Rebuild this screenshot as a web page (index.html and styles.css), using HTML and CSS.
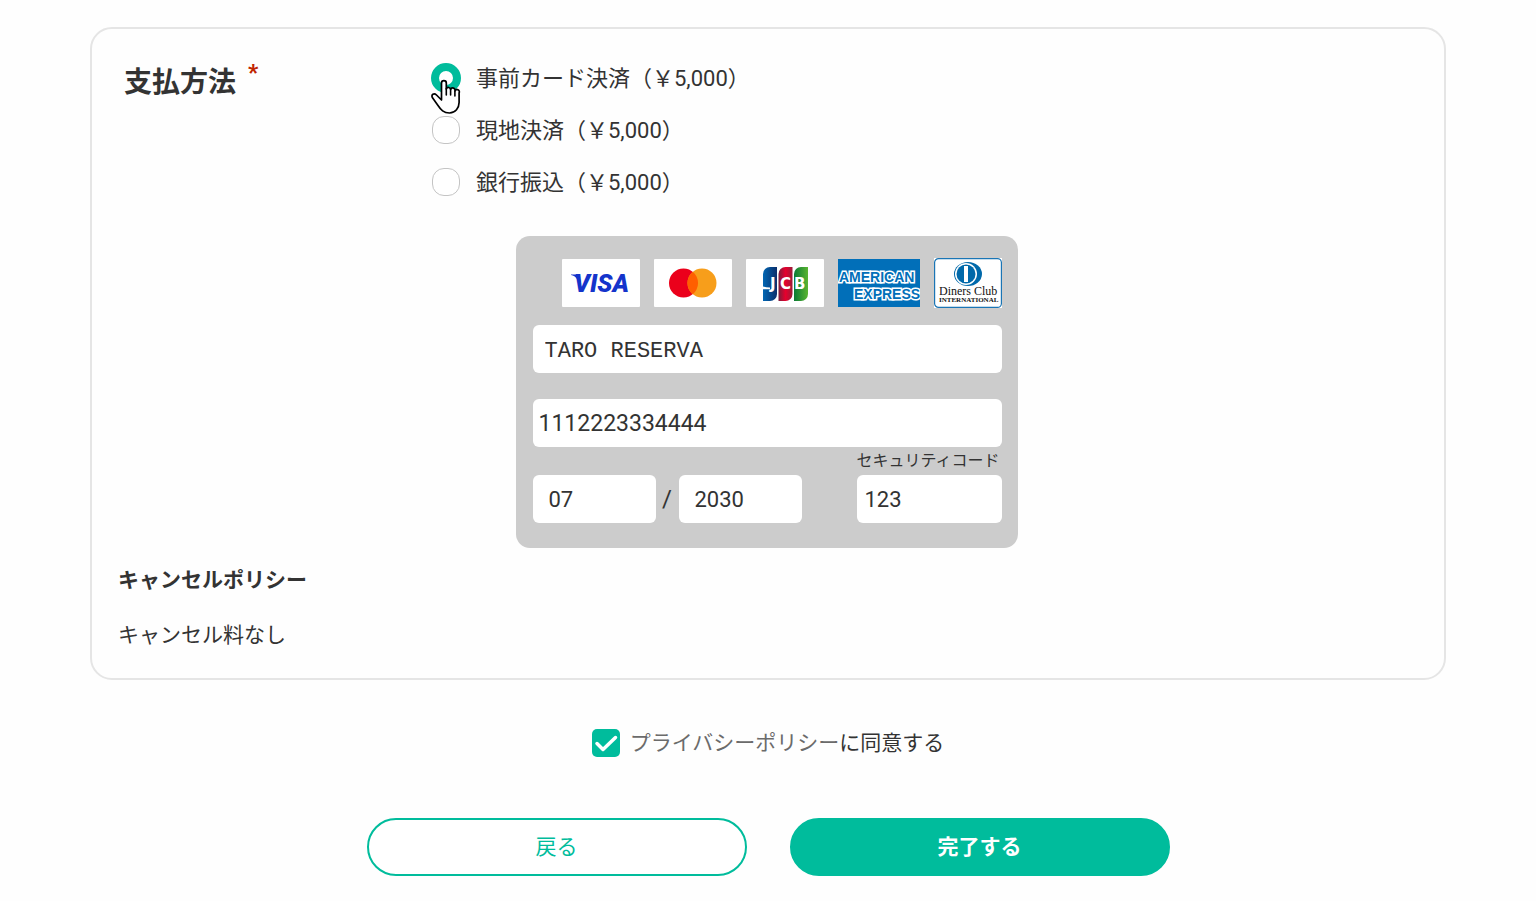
FILE: index.html
```html
<!DOCTYPE html>
<html lang="ja">
<head>
    <meta charset="UTF-8">
    <meta name="viewport" content="width=device-width, initial-scale=1.0">
    <title>支払方法</title>
    <link rel="stylesheet" href="styles.css">
</head>
<body>

    <form class="payment-form">
        <section class="panel">
            <div class="method">
                <h2 class="method-title" id="methodTitle">支払方法<span class="required">*</span></h2>

                <div class="options" role="radiogroup" aria-labelledby="methodTitle">
                    <div class="option">
                        <input type="radio" name="payment" id="payCard" checked>
                        <label for="payCard">事前カード決済（￥5,000）</label>
                        <!-- Hand pointer -->
                        <svg class="pointer" width="30" height="36" viewBox="0 0 30 36">
                            <path d="M10.5 21V4a2.4 2.4 0 0 1 4.8 0V10a2.2 2.2 0 0 1 4.3 .6a2.2 2.2 0 0 1 4.3 1.3a2.2 2.2 0 0 1 4.2 2V23.500C28 29 24.500 34 18.500 34C12.500 34 10 31 7 26.500L1.500 18.800C-.2 15.500 3 13.500 5.500 16z" fill="#fff" stroke="#000" stroke-width="1.7" stroke-linejoin="round"/>
                            <path d="M15.300 9.500V16M19.600 10.600V16M23.900 12V17" fill="none" stroke="#000" stroke-width="1.6" stroke-linecap="round"/>
                        </svg>
                    </div>
                    <div class="option">
                        <input type="radio" name="payment" id="payLocal">
                        <label for="payLocal">現地決済（￥5,000）</label>
                    </div>
                    <div class="option">
                        <input type="radio" name="payment" id="payBank">
                        <label for="payBank">銀行振込（￥5,000）</label>
                    </div>
                </div>
            </div>

            <div class="card">
                <div class="brands">
                    <svg width="78" height="48" viewBox="0 0 78 48" role="img" aria-label="VISA">
                        <rect width="78" height="48" rx="1" fill="#fff"/>
                        <path d="M9 15.500H16.500L19 24L15 20C13.500 17.800 11.500 16.500 9 16z" fill="#1434cb"/>
                        <text class="visa-text" x="12" y="33">VISA</text>
                    </svg>
                    <svg width="78" height="48" viewBox="0 0 78 48" role="img" aria-label="Mastercard">
                        <rect width="78" height="48" rx="1" fill="#fff"/>
                        <circle cx="29.500" cy="24" r="14.500" fill="#eb001b"/>
                        <circle cx="48" cy="24" r="14.500" fill="#f79e1b"/>
                        <path d="M38.750 12.800a14.500 14.500 0 0 1 0 22.400a14.500 14.500 0 0 1 0-22.400z" fill="#ff5f00"/>
                    </svg>
                    <svg width="78" height="48" viewBox="0 0 78 48" role="img" aria-label="JCB">
                        <defs>
                            <linearGradient id="jcbBlue"><stop offset="0" stop-color="#0066b3"/><stop offset="1" stop-color="#0b2f6b"/></linearGradient>
                            <linearGradient id="jcbRed"><stop offset="0" stop-color="#7a1f3d"/><stop offset=".5" stop-color="#e6002d"/><stop offset="1" stop-color="#9b1c3a"/></linearGradient>
                            <linearGradient id="jcbGreen"><stop offset="0" stop-color="#0b7a35"/><stop offset="1" stop-color="#5ab531"/></linearGradient>
                        </defs>
                        <rect width="78" height="48" rx="1" fill="#fff"/>
                        <path d="M17 15a7 7 0 0 1 7-7H31V35a7 7 0 0 1-7 7H17z" fill="url(#jcbBlue)"/>
                        <path d="M32.500 15a7 7 0 0 1 7-7H46.500V35a7 7 0 0 1-7 7H32.500z" fill="url(#jcbRed)"/>
                        <path d="M48 15a7 7 0 0 1 7-7H62V35a7 7 0 0 1-7 7H48z" fill="url(#jcbGreen)"/>
                        <path d="M17 27.500Q20 28.500 24 28.500V30.300H17z" fill="#fff"/>
                        <text class="jcb-text" x="24" y="30">J</text>
                        <text class="jcb-text" x="34" y="30">C</text>
                        <text class="jcb-text" x="48" y="30">B</text>
                    </svg>
                    <svg width="82" height="48" viewBox="0 0 82 48" role="img" aria-label="American Express">
                        <rect width="82" height="48" fill="#016fb9"/>
                        <text class="amex-text" x="1" y="23">AMERICAN</text>
                        <text class="amex-text" x="16" y="40">EXPRESS</text>
                    </svg>
                    <svg width="68" height="50" viewBox="0 0 68 50" role="img" aria-label="Diners Club International">
                        <rect width="68" height="50" fill="#fff"/>
                        <rect x=".6" y=".6" width="66.800" height="48.800" rx="4" fill="#fff" stroke="#1a75b5" stroke-width="1.200"/>
                        <ellipse cx="34" cy="16" rx="14" ry="12" fill="#0069aa"/>
                        <circle cx="32" cy="16" r="11" fill="#fff"/>
                        <circle cx="32" cy="16" r="9.500" fill="#0069aa"/>
                        <path d="M30 9.500a7 7 0 0 0 0 13zM34 9.500a7 7 0 0 1 0 13z" fill="#0069aa"/>
                        <rect x="30" y="8" width="4" height="16" fill="#fff"/>
                        <text class="diners-text" x="5" y="37">Diners Club</text>
                        <text class="diners-sub" x="5" y="44">INTERNATIONAL</text>
                    </svg>
                </div>

                <input class="field field-name" type="text" aria-label="カード名義" value="TARO RESERVA">
                <input class="field field-number" type="text" aria-label="カード番号" value="1112223334444">

                <div class="card-bottom">
                    <input class="field field-date" type="text" aria-label="有効期限（月）" value="07">
                    <span class="slash">/</span>
                    <input class="field field-date" type="text" aria-label="有効期限（年）" value="2030">
                    <div class="security">
                        <label for="securityCode">セキュリティコード</label>
                        <input class="field field-code" type="text" id="securityCode" value="123">
                    </div>
                </div>
            </div>

            <div class="policy">
                <h3>キャンセルポリシー</h3>
                <p>キャンセル料なし</p>
            </div>
        </section>

        <div class="agree">
            <input type="checkbox" id="agree" checked>
            <svg class="tick" width="28" height="28" viewBox="0 0 28 28">
                <path d="M5 14.500L11 20.500L23.500 8.500" fill="none" stroke="#fff" stroke-width="3.500" stroke-linecap="round" stroke-linejoin="round"/>
            </svg>
            <label for="agree"><a href="#">プライバシーポリシー</a>に同意する</label>
        </div>

        <div class="actions">
            <button type="button" class="btn btn-back">戻る</button>
            <button type="button" class="btn btn-submit">完了する</button>
        </div>
    </form>

</body>
</html>
```
FILE: styles.css
```css
* {
    box-sizing: border-box;
}

body {
    margin: 0;
    background-color: #fefefe;
    color: #333;
    font-family: Roboto, "Noto Sans CJK JP", sans-serif;
    font-size: 21px;
}

h2, h3, p {
    margin: 0;
}

input, button {
    margin: 0;
    font-family: inherit;
    color: inherit;
}

.payment-form {
    padding: 27px 90px 24px;
}

.panel {
    border: 2px solid #e5e5e5;
    border-radius: 22px;
    padding: 34px 29px 27px 26px;
}

/* Payment method */
.method {
    display: grid;
    grid-template-columns: 313px 1fr;
}

.method-title {
    display: flex;
    align-items: flex-start;
    gap: 12px;
    padding-left: 6px;
    font-size: 28px;
    line-height: 40px;
}

.required {
    color: #c02500;
    font-size: 22px;
    font-weight: 900;
    line-height: 20px;
}

.options {
    display: grid;
    gap: 22px;
}

.option {
    position: relative;
    display: flex;
    align-items: center;
    gap: 15px;
    height: 30px;
    font-size: 22px;
}

.option label,
.agree label {
    padding-bottom: 4px;
}

.option input {
    appearance: none;
    width: 28px;
    height: 28px;
    margin: 1px;
    border: 1px solid #c4c4c4;
    border-radius: 12px;
    background-color: #fff;
}

.option input:checked {
    width: 30px;
    height: 30px;
    margin: 0;
    border: 8px solid #00bc9c;
    border-radius: 50%;
}

.pointer {
    position: absolute;
    left: 0;
    top: 16px;
    z-index: 1;
}

/* Credit card */
.card {
    width: 502px;
    margin: 39px auto 0;
    padding: 22px 16px 25px 17px;
    border-radius: 14px;
    background-color: #ccc;
}

.brands {
    display: flex;
    justify-content: flex-end;
    align-items: center;
    gap: 14px;
    margin-bottom: 17px;
}

.visa-text {
    font: italic 900 25px Roboto, sans-serif;
    fill: #1434cb;
}

.jcb-text {
    font: bold 15px "DejaVu Sans", sans-serif;
    fill: #fff;
}

.amex-text {
    font: bold 14px "Liberation Sans", sans-serif;
    fill: #016fb9;
    stroke: #fff;
    stroke-width: 3px;
    paint-order: stroke;
}

.diners-text {
    font: 12px "Liberation Serif", serif;
    fill: #111;
}

.diners-sub {
    font: bold 7px "Liberation Serif", serif;
    fill: #111;
}

.field {
    display: block;
    width: 100%;
    height: 48px;
    border: none;
    border-radius: 6px;
    background-color: #fff;
    font-size: 22px;
}

.field-name {
    margin-bottom: 26px;
    padding: 4px 12px 0;
    font-family: "Liberation Mono", monospace;
}

.field-number {
    padding: 0 6px;
    font-size: 23px;
}

.card-bottom {
    display: flex;
    align-items: flex-end;
}

.field-date {
    width: 123px;
    padding: 0 16px;
}

.slash {
    width: 23px;
    font-size: 24px;
    line-height: 48px;
    text-align: center;
}

.security {
    width: 145px;
    margin-left: auto;
}

.security label {
    display: block;
    font-size: 16px;
    line-height: 28px;
    white-space: nowrap;
}

.field-code {
    padding: 0 8px;
}

/* Cancel policy */
.policy {
    margin-top: 16px;
    line-height: 32px;
}

.policy h3 {
    margin-bottom: 23px;
    font-size: 21px;
}

/* Agreement */
.agree {
    position: relative;
    display: flex;
    justify-content: center;
    align-items: center;
    gap: 10px;
    width: fit-content;
    height: 28px;
    margin: 49px auto 0;
}

.agree input {
    appearance: none;
    width: 28px;
    height: 28px;
    border-radius: 5px;
    background-color: #00bc9c;
}

.tick {
    position: absolute;
    left: 0;
    top: 0;
    pointer-events: none;
}

.agree input:not(:checked) {
    border: 1px solid #c4c4c4;
    background-color: #fff;
}

.agree a {
    color: #6b6b6b;
    text-decoration: none;
}

/* Buttons */
.actions {
    display: flex;
    justify-content: center;
    gap: 43px;
    margin-top: 61px;
}

.btn {
    width: 380px;
    height: 58px;
    padding: 0 0 4px;
    border: 2px solid #00bc9c;
    border-radius: 29px;
    font-size: 21px;
    cursor: pointer;
}

.btn-back {
    background-color: #fff;
    color: #00bc9c;
}

.btn-submit {
    background-color: #00bc9c;
    color: #fff;
    font-weight: bold;
}
```
